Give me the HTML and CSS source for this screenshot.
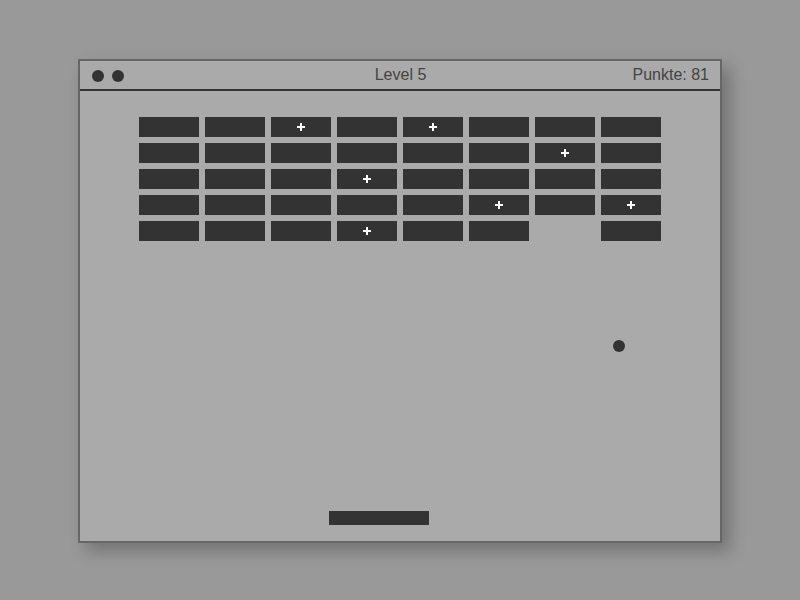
FILE: index.html
```html
<!DOCTYPE html>
<html lang="de">
<head>
<meta charset="utf-8">
<title>Breakout – Level 5</title>
<link rel="stylesheet" href="styles.css">
</head>
<body>
  <div class="window">
    <header class="titlebar">
      <div class="dots"><span class="dot"></span><span class="dot"></span></div>
      <div class="title">Level 5</div>
      <div class="score">Punkte: 81</div>
    </header>
    <main class="field">
      <div class="bricks">
        <div class="brick"></div><div class="brick"></div><div class="brick bonus"></div><div class="brick"></div>
        <div class="brick bonus"></div><div class="brick"></div><div class="brick"></div><div class="brick"></div>

        <div class="brick"></div><div class="brick"></div><div class="brick"></div><div class="brick"></div>
        <div class="brick"></div><div class="brick"></div><div class="brick bonus"></div><div class="brick"></div>

        <div class="brick"></div><div class="brick"></div><div class="brick"></div><div class="brick bonus"></div>
        <div class="brick"></div><div class="brick"></div><div class="brick"></div><div class="brick"></div>

        <div class="brick"></div><div class="brick"></div><div class="brick"></div><div class="brick"></div>
        <div class="brick"></div><div class="brick bonus"></div><div class="brick"></div><div class="brick bonus"></div>

        <div class="brick"></div><div class="brick"></div><div class="brick"></div><div class="brick bonus"></div>
        <div class="brick"></div><div class="brick"></div><div class="brick gone"></div><div class="brick"></div>
      </div>
      <div class="ball"></div>
      <div class="paddle"></div>
    </main>
  </div>
</body>
</html>
```
FILE: styles.css
```css
html, body {
  margin: 0;
  padding: 0;
}

body {
  background: #999999;
  width: 800px;
  height: 600px;
  overflow: hidden;
  padding-top: 59px;
  box-sizing: border-box;
  font-family: "Liberation Sans", Arial, sans-serif;
}

.window {
  width: 640px;
  height: 480px;
  margin: 0 auto;
  background: #aaaaaa;
  border: 2px solid #666666;
  box-shadow: 8px 8px 16px rgba(0, 0, 0, 0.25);
  display: flex;
  flex-direction: column;
}

.titlebar {
  height: 28px;
  border-bottom: 2px solid #333333;
  display: grid;
  grid-template-columns: 1fr auto 1fr;
  align-items: center;
  padding: 0 11px 0 12px;
  color: #444444;
  font-size: 16px;
}

.dots {
  display: flex;
  gap: 8px;
  align-items: center;
  padding-top: 2px;
}

.dot {
  width: 12px;
  height: 12px;
  border-radius: 50%;
  background: #333333;
}

.title {
  text-align: center;
}

.score {
  text-align: right;
}

.field {
  position: relative;
  flex: 1;
  padding-top: 26px;
}

.bricks {
  display: grid;
  grid-template-columns: repeat(8, 60px);
  grid-auto-rows: 20px;
  gap: 6px;
  justify-content: center;
}

.brick {
  background: #333333;
  position: relative;
}

.brick.gone {
  visibility: hidden;
}

.brick.bonus::before,
.brick.bonus::after {
  content: "";
  position: absolute;
  background: #ffffff;
  left: 50%;
  top: 50%;
}

.brick.bonus::before {
  width: 8px;
  height: 2px;
  transform: translate(-4px, -1px);
}

.brick.bonus::after {
  width: 2px;
  height: 8px;
  transform: translate(-1px, -4px);
}

.ball {
  position: absolute;
  left: 533px;
  top: 249px;
  width: 12px;
  height: 12px;
  border-radius: 50%;
  background: #333333;
}

.paddle {
  position: absolute;
  left: 249px;
  top: 420px;
  width: 100px;
  height: 14px;
  background: #333333;
}
```
